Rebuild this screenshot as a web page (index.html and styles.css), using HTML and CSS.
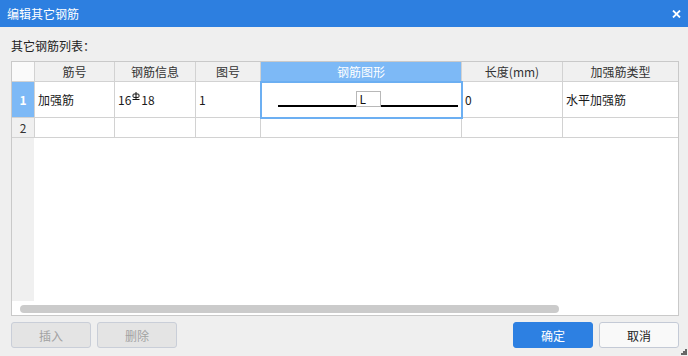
FILE: index.html
```html
<!DOCTYPE html>
<html lang="zh-CN">
<head>
    <meta charset="UTF-8">
    <title>编辑其它钢筋</title>
    <link rel="stylesheet" href="styles.css">
</head>
<body>
<div class="dialog">
    <div class="title-bar">
        <span class="title">编辑其它钢筋</span>
        <svg class="close" width="9" height="8" viewBox="0 0 9 8">
            <path d="M1 0.5 L8 7.5 M8 0.5 L1 7.5" stroke="#fff" stroke-width="1.8"/>
        </svg>
    </div>

    <div class="content">
        <div class="list-label">其它钢筋列表：</div>

        <div class="grid-box">
            <div class="grid">
                <div class="cell head corner"></div>
                <div class="cell head">筋号</div>
                <div class="cell head">钢筋信息</div>
                <div class="cell head">图号</div>
                <div class="cell head active">钢筋图形</div>
                <div class="cell head">长度(mm)</div>
                <div class="cell head last">加强筋类型</div>

                <div class="cell row-head active">1</div>
                <div class="cell">加强筋</div>
                <div class="cell">16<svg class="grade" width="8" height="9" viewBox="0 0 8 9">
                    <rect x="1" y="2" width="6" height="3.4" rx="1" fill="none" stroke="#111" stroke-width="1"/>
                    <path d="M4 0 V7.5 M0.5 7.5 H7.5" stroke="#111" stroke-width="1"/>
                </svg>18</div>
                <div class="cell">1</div>
                <div class="cell shape-cell">
                    <div class="shape">
                        <div class="seg"></div>
                        <div class="shape-box">L</div>
                        <div class="seg"></div>
                    </div>
                </div>
                <div class="cell">0</div>
                <div class="cell last">水平加强筋</div>

                <div class="cell row-head">2</div>
                <div class="cell"></div>
                <div class="cell"></div>
                <div class="cell"></div>
                <div class="cell"></div>
                <div class="cell"></div>
                <div class="cell last"></div>
            </div>
            <div class="filler">
                <div class="filler-head"></div>
            </div>
            <div class="scroll-track">
                <div class="scroll-thumb"></div>
            </div>
        </div>

        <div class="actions">
            <div class="btn-group">
                <button class="btn disabled">插入</button>
                <button class="btn disabled">删除</button>
            </div>
            <div class="btn-group">
                <button class="btn primary">确定</button>
                <button class="btn">取消</button>
            </div>
        </div>
    </div>

    <svg class="grip" width="6" height="6" viewBox="0 0 6 6">
        <rect x="4" y="0" width="2" height="2" fill="#666"/>
        <rect x="2" y="2" width="2" height="2" fill="#666"/>
        <rect x="4" y="2" width="2" height="2" fill="#666"/>
        <rect x="0" y="4" width="2" height="2" fill="#666"/>
        <rect x="2" y="4" width="2" height="2" fill="#666"/>
        <rect x="4" y="4" width="2" height="2" fill="#666"/>
    </svg>
</div>
</body>
</html>
```

FILE: styles.css
```css
body {
    margin: 0;
    font-family: "Noto Sans CJK SC", "Noto Sans", sans-serif;
    font-size: 12px;
    color: #1a1a1a;
    background: #efefef;
}
.dialog {
    position: relative;
    width: 688px;
    height: 356px;
    background: #efefef;
    overflow: hidden;
}
.title-bar {
    height: 27px;
    background: #2d7fe0;
    color: #fff;
    display: flex;
    align-items: center;
    justify-content: space-between;
    padding: 0 7px 0 7px;
}
.title {
    line-height: 16px;
}
.close {
    display: block;
    margin-top: 0;
}
.content {
    padding: 0 9px 0 11px;
}
.list-label {
    margin-top: 11px;
    line-height: 16px;
    margin-bottom: 7px;
    color: #222;
}
.grid-box {
    height: 255px;
    box-sizing: border-box;
    border: 1px solid #c9c9c9;
    background: #fff;
    display: flex;
    flex-direction: column;
}
.grid {
    display: grid;
    grid-template-columns: 23px 80px 81px 65px 201px 101px 1fr;
    grid-template-rows: 20px 36px 20px;
}
.cell {
    box-sizing: border-box;
    border-right: 1px solid #d2d2d2;
    border-bottom: 1px solid #d2d2d2;
    padding-left: 3px;
    display: flex;
    align-items: center;
    line-height: 16px;
    white-space: nowrap;
}
.cell.last {
    border-right: none;
}
.head {
    background: #f0f0f0;
    color: #333;
    justify-content: center;
    padding-left: 0;
}
.head.corner {
    background: #fafafa;
}
.head.active {
    background: #7db9f6;
    color: #fff;
}
.row-head {
    background: #f0f0f0;
    justify-content: center;
    padding-left: 0;
    color: #333;
}
.row-head.active {
    background: #7db9f6;
    color: #fff;
    font-weight: bold;
}
.grade {
    display: block;
    margin: -6px 1px 0 1px;
}
.shape-cell {
    position: relative;
    z-index: 1;
    outline: 2px solid #6caff2;
    outline-offset: -1px;
    padding: 9px 3px 0 17px;
    align-items: flex-start;
}
.shape {
    display: flex;
    width: 100%;
    height: 16px;
}
.seg {
    flex: 1;
    border-bottom: 2px solid #000;
}
.shape-box {
    width: 25px;
    box-sizing: border-box;
    border: 1px solid #b8b8b8;
    background: #fff;
    padding-left: 3px;
    line-height: 14px;
    color: #111;
}
.filler {
    flex: 1;
    display: flex;
}
.filler-head {
    width: 22px;
    background: #f0f0f0;
}
.scroll-track {
    height: 14px;
    box-sizing: border-box;
    padding: 4px 0 2px 8px;
}
.scroll-thumb {
    width: 539px;
    height: 8px;
    border-radius: 4px;
    background: #cbcbcb;
}
.actions {
    display: flex;
    justify-content: space-between;
    margin-top: 6px;
}
.btn-group {
    display: flex;
    gap: 6px;
}
.btn {
    width: 80px;
    height: 26px;
    box-sizing: border-box;
    border: 1px solid #c4cad6;
    border-radius: 3px;
    background: #f9f9f9;
    color: #222;
    font-family: inherit;
    font-size: 12px;
    padding: 0;
}
.btn.disabled {
    background: #e4e4e4;
    color: #a2a2a2;
    border-color: #c9ced8;
}
.btn.primary {
    background: #2d80e2;
    border-color: #2d80e2;
    color: #fff;
}
.grip {
    position: absolute;
    right: 1px;
    bottom: 1px;
}
```
